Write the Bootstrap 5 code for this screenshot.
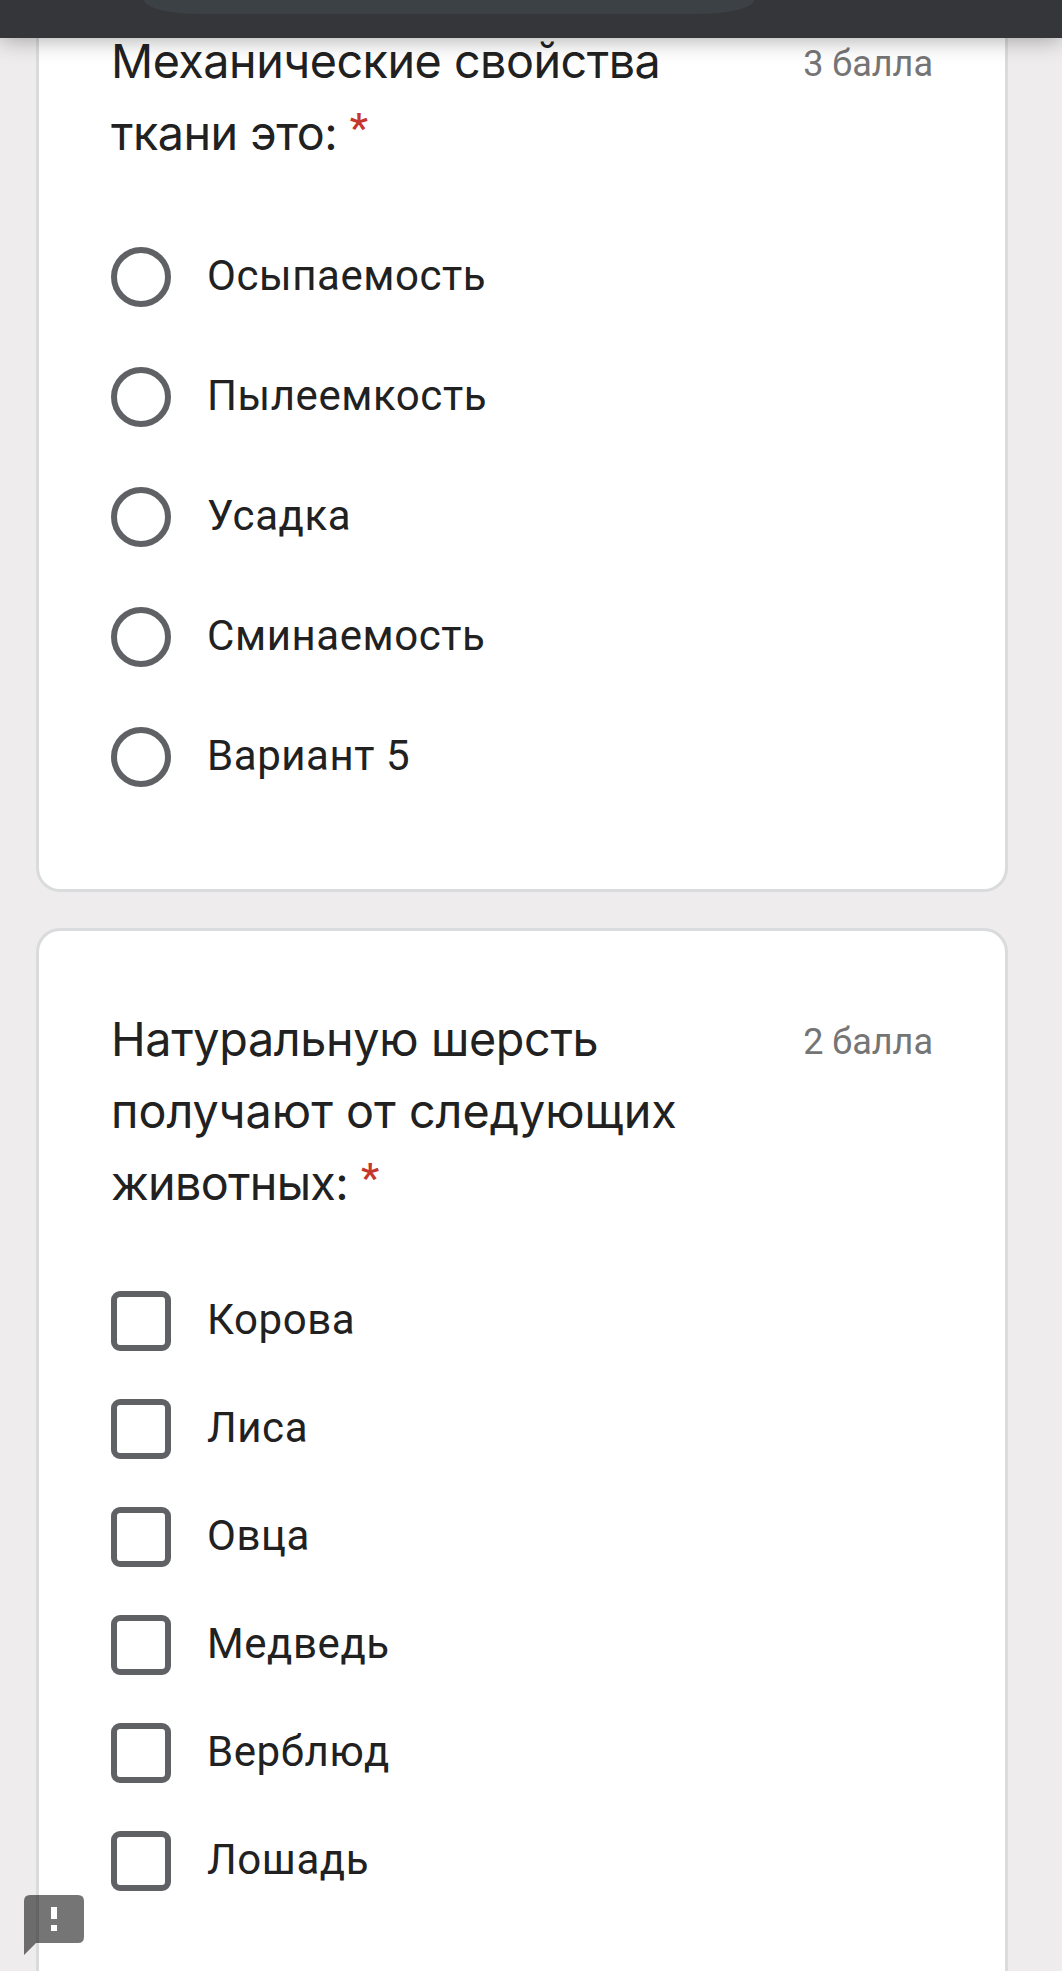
<!DOCTYPE html>
<html lang="ru">
<head>
<meta charset="utf-8">
<meta name="viewport" content="width=device-width, initial-scale=1">
<title>Тест</title>
<link rel="stylesheet" href="https://cdn.jsdelivr.net/npm/bootstrap@5.3.0/dist/css/bootstrap.min.css">
<style>
  body { background: #eeeced; color: #212121; font-family: Roboto, sans-serif; height: 1971px; }
  .browser-bar { height: 38px; background: #35363a; padding-left: 144px; z-index: 3; box-shadow: 0 0 24px rgba(0,0,0,.38); }
  .address-pill { width: 610px; height: 14px; background: #3b4144; border-radius: 0 0 56px 56px / 0 0 14px 14px; }
  .form-column { width: 972px; margin-left: 36px; gap: 36px; }
  .question { --bs-card-border-color: #dadbdc; border-width: 3px; border-radius: 24px; background: #fff; padding: 72px 72px 120px; }
  .question-top { margin-top: -17px; border-top: 0; border-radius: 0 0 24px 24px; padding-top: 4px; padding-bottom: 72px; }
  .question-title { font: 400 46.7px/72px Inter, sans-serif; margin: 0 0 48px; }
  .question-top .question-title { letter-spacing: -.5px; }
  .line-tight { letter-spacing: -.35px; }
  .line-tighter { letter-spacing: -.7px; }
  .required { color: #c5372c; font: 500 41px/1 Roboto, sans-serif; vertical-align: 8px; }
  .points { font-size: 36px; line-height: 48px; color: #757575; padding-top: 15px; }
  .option { height: 108px; gap: 36px; font-size: 42px; line-height: 60px; letter-spacing: .57px; }
  .option span { padding-bottom: 3px; }
  .option-tall { height: 120px; }
  .option .form-check-input { width: 60px; height: 60px; border: 6px solid #5f6165; }
  .option .form-check-input[type=checkbox] { border-radius: 9px; }
  .feedback { left: 24px; bottom: 16px; width: 60px; height: 60px; }
</style>
<script src="https://cdn.jsdelivr.net/npm/bootstrap@5.3.0/dist/js/bootstrap.bundle.min.js"></script>
</head>
<body class="position-relative overflow-hidden">
<header class="browser-bar position-relative"><div class="address-pill"></div></header>
<main class="form-column d-flex flex-column">
  <section class="card question question-top">
    <div class="d-flex justify-content-between align-items-start">
      <h2 class="question-title">Механические свойства<br>ткани это: <span class="required">*</span></h2>
      <div class="points text-nowrap">3 балла</div>
    </div>
    <label class="option option-tall d-flex align-items-center"><input class="form-check-input m-0" type="radio" name="fabric"><span>Осыпаемость</span></label>
    <label class="option option-tall d-flex align-items-center"><input class="form-check-input m-0" type="radio" name="fabric"><span>Пылеемкость</span></label>
    <label class="option option-tall d-flex align-items-center"><input class="form-check-input m-0" type="radio" name="fabric"><span>Усадка</span></label>
    <label class="option option-tall d-flex align-items-center"><input class="form-check-input m-0" type="radio" name="fabric"><span>Сминаемость</span></label>
    <label class="option option-tall d-flex align-items-center"><input class="form-check-input m-0" type="radio" name="fabric"><span>Вариант 5</span></label>
  </section>
  <section class="card question">
    <div class="d-flex justify-content-between align-items-start">
      <h2 class="question-title"><span class="line-tight">Натуральную шерсть</span><br>получают от следующих<br><span class="line-tighter">животных:</span> <span class="required">*</span></h2>
      <div class="points text-nowrap">2 балла</div>
    </div>
    <label class="option d-flex align-items-center"><input class="form-check-input m-0" type="checkbox"><span>Корова</span></label>
    <label class="option d-flex align-items-center"><input class="form-check-input m-0" type="checkbox"><span>Лиса</span></label>
    <label class="option d-flex align-items-center"><input class="form-check-input m-0" type="checkbox"><span>Овца</span></label>
    <label class="option d-flex align-items-center"><input class="form-check-input m-0" type="checkbox"><span>Медведь</span></label>
    <label class="option d-flex align-items-center"><input class="form-check-input m-0" type="checkbox"><span>Верблюд</span></label>
    <label class="option d-flex align-items-center"><input class="form-check-input m-0" type="checkbox"><span>Лошадь</span></label>
  </section>
</main>
<svg class="feedback position-absolute" viewBox="0 0 60 60" aria-hidden="true">
  <path d="M27 12h6v12h-6zM27 30h6v6h-6z" fill="#fff"/>
  <path fill-rule="evenodd" d="M6 0H54Q60 0 60 6V42Q60 48 54 48H12L0 60V6Q0 0 6 0ZM27 12V24H33V12ZM27 30V36H33V30Z" fill="#000" fill-opacity=".54"/>
</svg>
</body>
</html>
